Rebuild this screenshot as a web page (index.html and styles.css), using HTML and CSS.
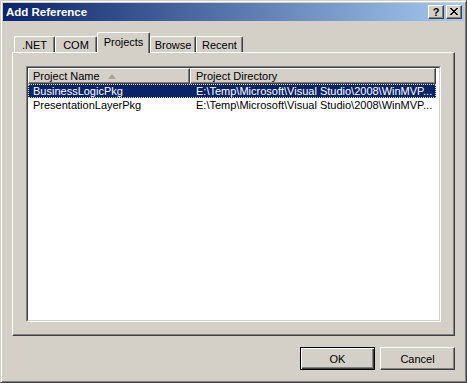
FILE: index.html
```html
<!DOCTYPE html>
<html lang="en">
<head>
    <meta charset="UTF-8">
    <title>Add Reference</title>
    <link rel="stylesheet" href="styles.css">
</head>
<body>
    <div class="window">
        <div class="titlebar">
            <span class="title">Add Reference</span>
            <span class="caption-btn help">?</span>
            <span class="caption-btn close">
                <svg width="8" height="7" viewBox="0 0 8 7">
                    <path d="M0 0h2v1h1v1h2v-1h1v-1h2v1h-1v1h-1v1h-1v1h1v1h1v1h1v1h-2v-1h-1v-1h-2v1h-1v1h-2v-1h1v-1h1v-1h1v-1h-1v-1h-1v-1h-1z" fill="#000"/>
                </svg>
            </span>
        </div>

        <div class="content">
            <div class="tabs">
                <div class="tab tab-net">.NET</div>
                <div class="tab tab-com">COM</div>
                <div class="tab tab-projects selected">Projects</div>
                <div class="tab tab-browse">Browse</div>
                <div class="tab tab-recent">Recent</div>
            </div>

            <div class="panel">
                <div class="list">
                    <div class="list-inner">
                        <div class="header">
                            <div class="col col-name">
                                Project Name
                                <svg class="sort-arrow" width="8" height="5" viewBox="0 0 8 5">
                                    <path d="M0 5 L4 0 L8 5 Z" fill="#a8a49c"/>
                                </svg>
                            </div>
                            <div class="col col-dir">Project Directory</div>
                        </div>
                        <div class="row selected">
                            <div class="cell col-name">BusinessLogicPkg</div>
                            <div class="cell col-dir">E:\Temp\Microsoft\Visual Studio\2008\WinMVP...</div>
                        </div>
                        <div class="row">
                            <div class="cell col-name">PresentationLayerPkg</div>
                            <div class="cell col-dir">E:\Temp\Microsoft\Visual Studio\2008\WinMVP...</div>
                        </div>
                    </div>
                </div>
            </div>

            <div class="buttons">
                <button class="btn default">OK</button>
                <button class="btn">Cancel</button>
            </div>
        </div>
    </div>
</body>
</html>
```

FILE: styles.css
```css
body {
    margin: 0;
    background-color: #d4d0c8;
    font-family: 'Liberation Sans', Arial, sans-serif;
    font-size: 11px;
    color: #000;
}
.window {
    width: 467px;
    height: 383px;
    box-sizing: border-box;
    background-color: #d4d0c8;
    border: 1px solid;
    border-color: #d4d0c8 #404040 #404040 #d4d0c8;
    box-shadow: inset 1px 1px #fff, inset -1px -1px #808080;
    padding: 2px;
    display: flex;
    flex-direction: column;
}
.titlebar {
    height: 18px;
    background: linear-gradient(to right, #0a246a, #a6caf0);
    display: flex;
    align-items: center;
    padding: 0 2px 0 3px;
    color: #fff;
}
.title {
    flex: 1;
    font-weight: bold;
    font-size: 11.5px;
}
.caption-btn {
    width: 16px;
    height: 14px;
    box-sizing: border-box;
    background-color: #d4d0c8;
    border: 1px solid;
    border-color: #fff #404040 #404040 #fff;
    box-shadow: inset -1px -1px #808080;
    display: flex;
    align-items: center;
    justify-content: center;
    color: #000;
}
.caption-btn.help {
    font-weight: bold;
    font-size: 11px;
    margin-right: 2px;
    padding-bottom: 1px;
}
.caption-btn.close svg {
    display: block;
    margin-bottom: 1px;
}
.content {
    flex: 1;
    padding: 11px 9px 0 9px;
    display: flex;
    flex-direction: column;
}
.tabs {
    display: flex;
    align-items: flex-end;
    height: 20px;
    padding-left: 2px;
    position: relative;
    z-index: 1;
}
.tab {
    height: 16px;
    box-sizing: border-box;
    border: 1px solid;
    border-bottom: none;
    border-color: #fff #404040 #404040 #fff;
    border-radius: 2px 2px 0 0;
    box-shadow: inset -1px 0 #808080;
    background-color: #d4d0c8;
    text-align: center;
    line-height: 16px;
}
.tab-net { width: 41px; }
.tab-com { width: 42px; }
.tab-projects { width: 53px; }
.tab-browse { width: 46px; }
.tab-recent { width: 47px; }
.tab.selected {
    height: 21px;
    margin-bottom: -1px;
    line-height: 18px;
}
.panel {
    height: 284px;
    box-sizing: border-box;
    border: 1px solid;
    border-color: #fff #404040 #404040 #fff;
    box-shadow: inset -1px -1px #808080;
    padding: 13px;
}
.list {
    height: 256px;
    box-sizing: border-box;
    border: 1px solid;
    border-color: #808080 #fff #fff #808080;
}
.list-inner {
    height: 100%;
    box-sizing: border-box;
    border: 1px solid;
    border-color: #404040 #d4d0c8 #d4d0c8 #404040;
    background-color: #fff;
}
.header {
    display: flex;
    height: 16px;
}
.header .col {
    box-sizing: border-box;
    background-color: #d4d0c8;
    border-top: 1px solid #fff;
    border-left: 1px solid #fff;
    border-right: 1px solid #404040;
    border-bottom: 1px solid #404040;
    box-shadow: inset -1px -1px #808080;
    padding-left: 4px;
    line-height: 14px;
    display: flex;
    align-items: center;
    white-space: nowrap;
}
.col-name { width: 162px; }
.col-dir { width: 246px; }
.header .col-dir { padding-left: 5px; }
.sort-arrow {
    margin-left: 8px;
}
.row {
    display: flex;
    height: 14px;
    width: 408px;
    box-sizing: border-box;
    align-items: center;
}
.row.selected {
    background-color: #0a246a;
    color: #fff;
    outline: 1px dotted #f5db95;
    outline-offset: -1px;
}
.cell {
    box-sizing: border-box;
    padding-left: 5px;
    white-space: nowrap;
    overflow: hidden;
}
.cell.col-dir { padding-left: 6px; }
.buttons {
    display: flex;
    justify-content: flex-end;
    gap: 5px;
    margin-top: 11px;
}
.btn {
    width: 75px;
    height: 23px;
    box-sizing: border-box;
    font-family: inherit;
    font-size: 11px;
    color: #000;
    background-color: #d4d0c8;
    border: 1px solid;
    border-color: #fff #404040 #404040 #fff;
    box-shadow: inset -1px -1px #808080;
    padding: 0;
}
.btn.default {
    border-color: #000;
    box-shadow: inset 1px 1px #fff, inset -1px -1px #404040, inset -2px -2px #808080;
}
```
